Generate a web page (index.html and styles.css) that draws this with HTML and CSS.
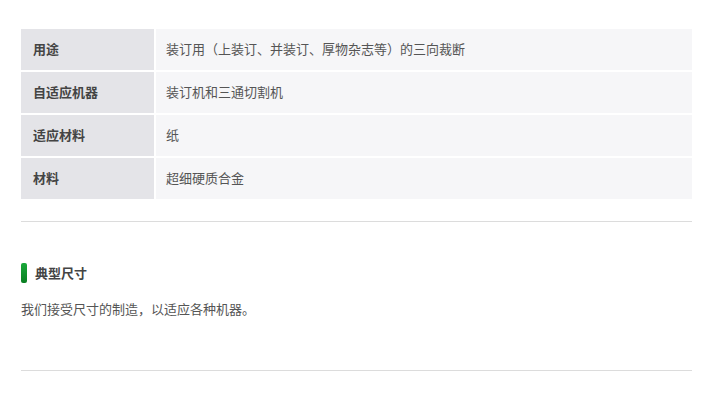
FILE: index.html
```html
<!DOCTYPE html>
<html lang="zh-CN">
<head>
<meta charset="utf-8">
<link rel="stylesheet" href="styles.css">
</head>
<body>
<div class="page">
  <table class="spec">
    <tr><th>用途</th><td>装订用（上装订、并装订、厚物杂志等）的三向裁断</td></tr>
    <tr><th>自适应机器</th><td>装订机和三通切割机</td></tr>
    <tr><th>适应材料</th><td>纸</td></tr>
    <tr><th>材料</th><td>超细硬质合金</td></tr>
  </table>
  <hr class="rule rule-top">
  <h3 class="title"><span class="mark"></span>典型尺寸</h3>
  <p class="desc">我们接受尺寸的制造，以适应各种机器。</p>
  <hr class="rule rule-bottom">
</div>
</body>
</html>
```
FILE: styles.css
```css
html, body { margin: 0; padding: 0; background: #fff; }
body {
  font-family: "Noto Sans CJK SC", "Noto Sans", sans-serif;
  font-size: 13px;
  color: #444;
}
.page { padding: 27px 23px 0 19px; }
.spec {
  width: 675px;
  border-collapse: separate;
  border-spacing: 2px;
}
.spec th, .spec td {
  height: 39px;
  padding: 0 0 2px 0;
  font-size: 13px;
  line-height: 17px;
  vertical-align: middle;
  text-align: left;
}
.spec th {
  width: 121px;
  padding-left: 12px;
  background: #e4e4e8;
  font-weight: bold;
  color: #444;
}
.spec td {
  padding-left: 10px;
  background: #f6f6f8;
  color: #555;
}
.rule {
  border: 0;
  height: 1px;
  background: #dcdcdc;
  margin: 0 0 0 2px;
  width: 671px;
}
.rule-top { margin-top: 20px; }
.title {
  display: flex;
  align-items: center;
  gap: 8px;
  margin: 41px 0 0 2px;
  font-size: 13px;
  line-height: 20px;
  font-weight: bold;
  color: #444;
}
.mark {
  display: block;
  width: 6px;
  height: 20px;
  border-radius: 2px;
  background: linear-gradient(#1aa83a, #0a7e22);
}
.desc {
  margin: 17px 0 0 2px;
  line-height: 18px;
  color: #555;
}
.rule-bottom { margin-top: 52px; }
```
